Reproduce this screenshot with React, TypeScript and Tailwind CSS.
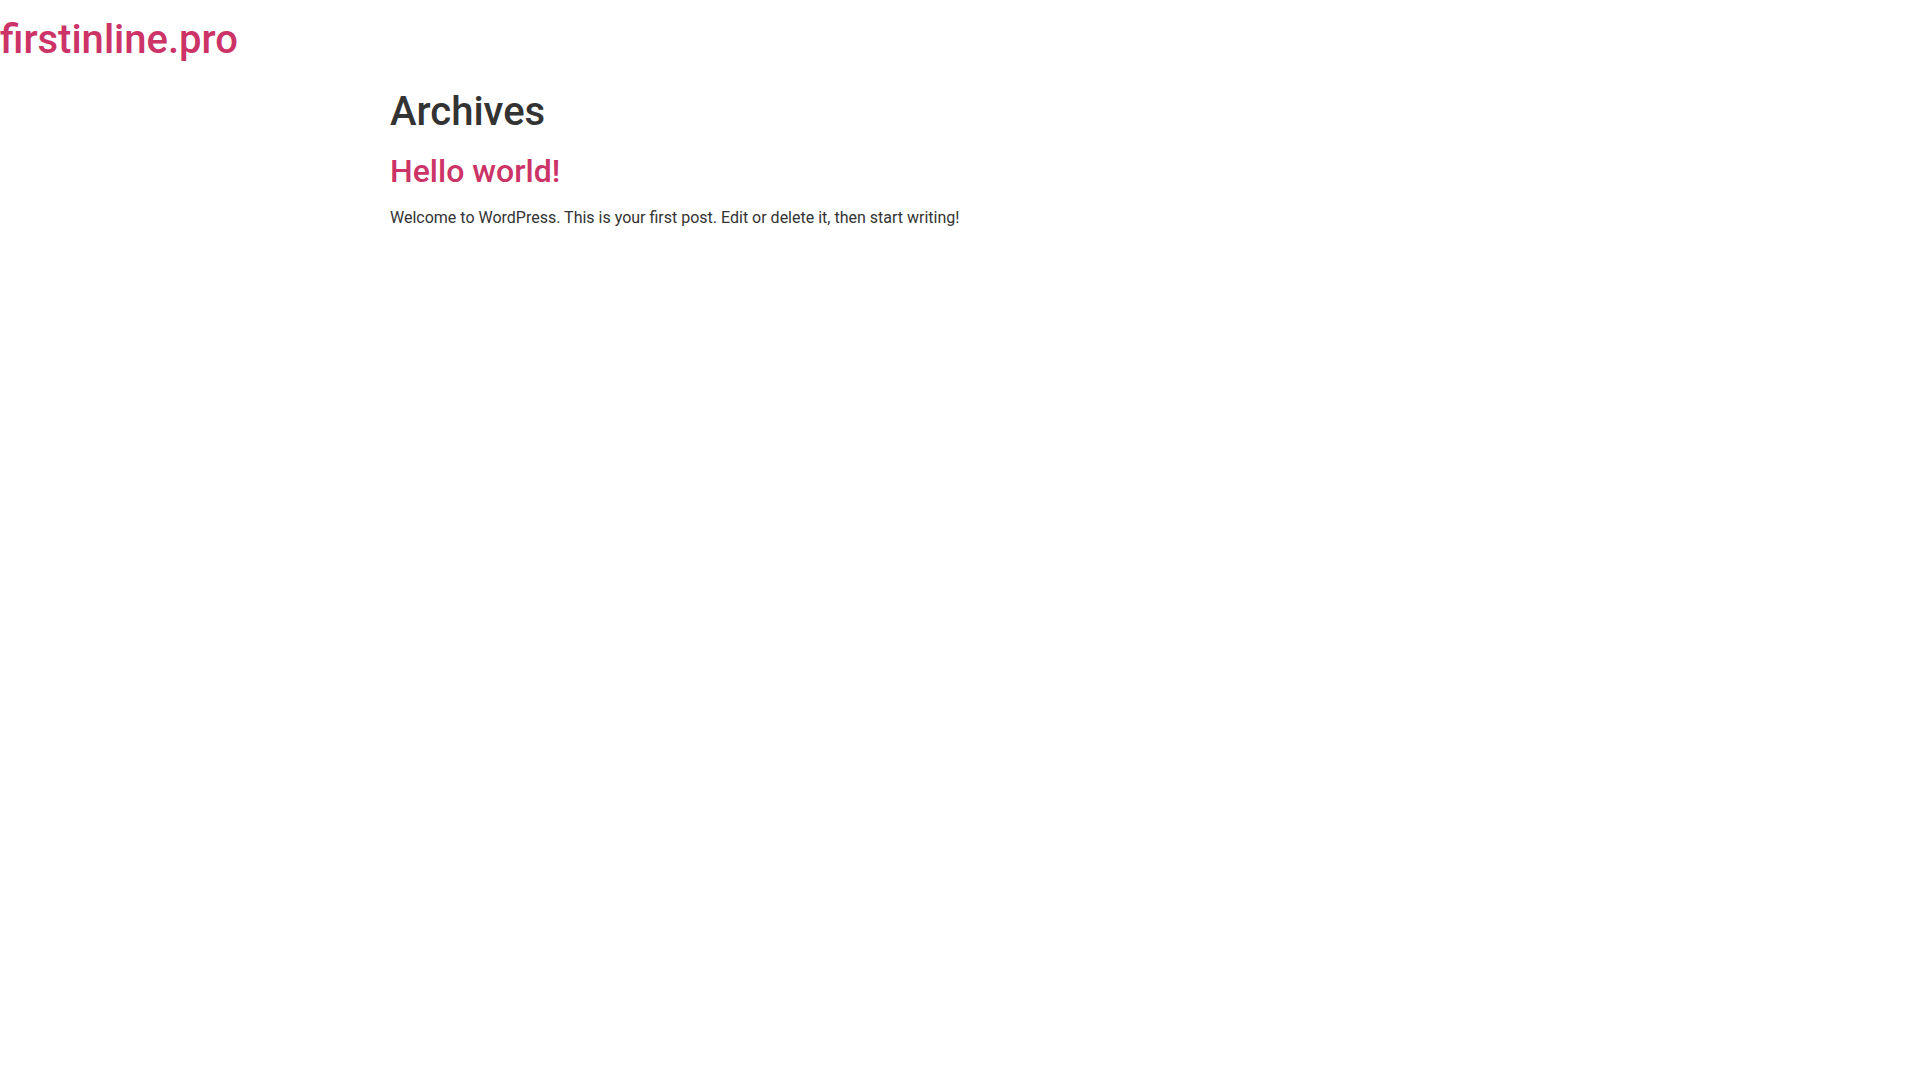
import React from "react";

export default function App() {
  return (
    <div className="min-h-screen bg-white text-[#333333] font-['Roboto',_'Liberation_Sans',_sans-serif] text-[16px] leading-[1.5]">
      <header className="py-4">
        <p className="m-0 text-[40px] leading-[1.2] font-medium text-[#cc3366]">
          <a href="#" className="text-[#cc3366]">firstinline.pro</a>
        </p>
      </header>
      <main className="max-w-[1140px] mx-auto">
        <h1 className="mt-2 mb-4 text-[40px] leading-[1.2] font-medium text-[#333333]">Archives</h1>
        <article>
          <h2 className="mt-4 mb-4 text-[32px] leading-[1.2] font-medium">
            <a href="#" className="text-[#cc3366]">Hello world!</a>
          </h2>
          <p className="m-0">Welcome to WordPress. This is your first post. Edit or delete it, then start writing!</p>
        </article>
      </main>
    </div>
  );
}
